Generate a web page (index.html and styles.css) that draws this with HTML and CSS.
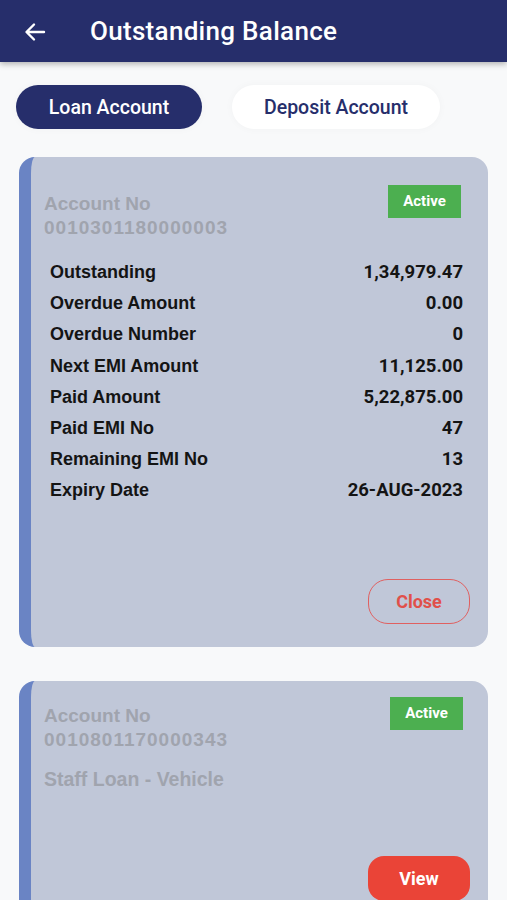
FILE: index.html
```html
<!DOCTYPE html>
<html>
<head>
  <title>Outstanding Balance</title>
  <link rel="stylesheet" href="styles.css">
</head>
<body>

<header class="topbar">
  <span class="back">
    <svg width="22" height="20" viewBox="0 0 22 20">
      <path d="M20 10H3M10 2.5L2.5 10L10 17.5" fill="none" stroke="#fff" stroke-width="2.4" stroke-linecap="round" stroke-linejoin="round"/>
    </svg>
  </span>
  <h1 class="title">Outstanding Balance</h1>
</header>

<nav class="tabs">
  <button class="tab tab-active">Loan Account</button>
  <button class="tab">Deposit Account</button>
</nav>

<div class="card card-open">
  <div class="card-head">
    <div class="acc">
      <div class="acc-label">Account No</div>
      <div class="acc-no">0010301180000003</div>
    </div>
    <span class="badge">Active</span>
  </div>

  <div class="rows">
    <div class="row"><span>Outstanding</span><b>1,34,979.47</b></div>
    <div class="row"><span>Overdue Amount</span><b>0.00</b></div>
    <div class="row"><span>Overdue Number</span><b>0</b></div>
    <div class="row"><span>Next EMI Amount</span><b>11,125.00</b></div>
    <div class="row"><span>Paid Amount</span><b>5,22,875.00</b></div>
    <div class="row"><span>Paid EMI No</span><b>47</b></div>
    <div class="row"><span>Remaining EMI No</span><b>13</b></div>
    <div class="row"><span>Expiry Date</span><b>26-AUG-2023</b></div>
  </div>

  <div class="actions actions-open">
    <button class="btn btn-outline">Close</button>
  </div>
</div>

<div class="card card-closed">
  <div class="card-head">
    <div class="acc">
      <div class="acc-label">Account No</div>
      <div class="acc-no">0010801170000343</div>
      <div class="acc-type">Staff Loan - Vehicle</div>
    </div>
    <span class="badge">Active</span>
  </div>

  <div class="actions actions-closed">
    <button class="btn btn-fill">View</button>
  </div>
</div>

</body>
</html>
```

FILE: styles.css
```css
body {
  margin: 0;
  background-color: #f8f9fa;
  font-family: Roboto, "Liberation Sans", Arial, sans-serif;
  overflow: hidden;
}

.topbar {
  height: 62px;
  background-color: #262e6b;
  display: flex;
  align-items: center;
  box-shadow: 0 2px 6px rgba(0, 0, 0, 0.3);
  position: relative;
}

.back {
  display: flex;
  margin-left: 24px;
  margin-top: 2px;
}

.title {
  margin: 0 0 0 44px;
  color: #fff;
  font-size: 26px;
  font-weight: 500;
  letter-spacing: 0.3px;
}

.tabs {
  display: flex;
  gap: 30px;
  padding: 23px 16px 0;
}

.tab {
  height: 44px;
  border: none;
  border-radius: 22px;
  font-family: Roboto, sans-serif;
  font-size: 19.5px;
  font-weight: 500;
  color: #262e6b;
  background: #fff;
  width: 208px;
  box-shadow: 0 0 8px rgba(0, 0, 0, 0.03);
}

.tab-active {
  width: 186px;
  background-color: #262e6b;
  color: #fff;
}

.card {
  margin: 0 19px;
  background-color: #c0c7d8;
  border-left: 12px solid #6a84c4;
  border-radius: 16px;
  padding: 0 25px 0 13px;
}

.card-open {
  margin-top: 28px;
  padding-top: 28px;
  padding-bottom: 23px;
}

.card-closed {
  margin-top: 34px;
  padding-top: 16px;
  height: 300px;
}

.card-head {
  display: flex;
  justify-content: space-between;
  align-items: flex-start;
}

.acc {
  padding-top: 7px;
  font-family: "Liberation Sans", Arial, sans-serif;
  font-weight: bold;
  color: #a0a4ae;
  font-size: 19px;
  line-height: 24px;
}

.acc-no {
  letter-spacing: 1px;
}

.acc-type {
  margin-top: 15px;
  font-size: 19.5px;
}

.badge {
  width: 73px;
  height: 33px;
  line-height: 33px;
  text-align: center;
  background-color: #4caf50;
  color: #fff;
  font-size: 15px;
  font-weight: bold;
  margin-right: 2px;
}

.card-closed .badge {
  margin-right: 0;
}

.rows {
  margin-top: 17px;
  padding-left: 6px;
}

.row {
  display: flex;
  justify-content: space-between;
  height: 31.2px;
  line-height: 31.2px;
  font-size: 18px;
  color: #141414;
}

.row span {
  font-family: "Liberation Sans", Arial, sans-serif;
  font-weight: bold;
}

.row b {
  font-family: Roboto, sans-serif;
  font-weight: bold;
  font-size: 18.5px;
}

.actions {
  display: flex;
  justify-content: flex-end;
}

.actions-open {
  margin-top: 72px;
  margin-right: -7px;
}

.actions-closed {
  margin-top: 65px;
  margin-right: -7px;
}

.btn {
  width: 102px;
  height: 45px;
  font-family: Roboto, sans-serif;
  font-size: 18px;
  font-weight: bold;
  border-radius: 20px;
}

.btn-outline {
  background: transparent;
  border: 1.5px solid #e06060;
  color: #e0504a;
}

.btn-fill {
  background-color: #ea4437;
  border: none;
  color: #fff;
  border-radius: 16px;
}
```
